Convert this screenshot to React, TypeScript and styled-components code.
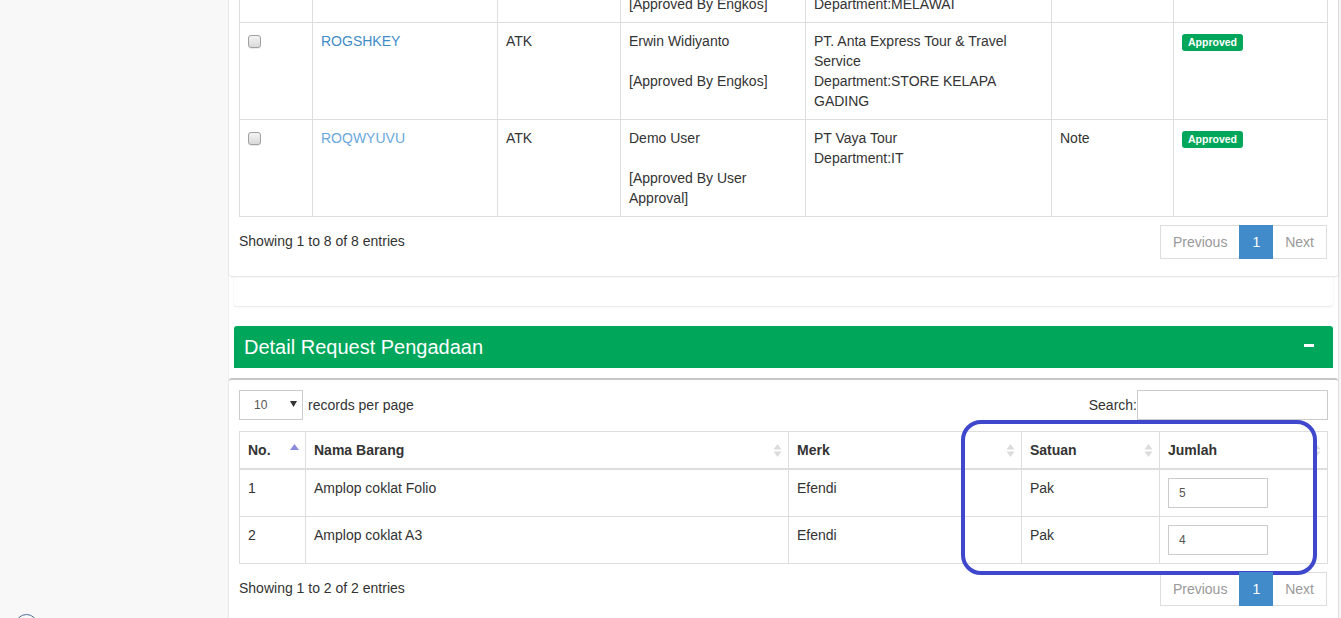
import React from 'react';
import styled, { createGlobalStyle } from 'styled-components';

const GlobalStyle = createGlobalStyle`
  html, body { margin: 0; padding: 0; }
  body {
    background: #f8f8f8;
    font-family: "Liberation Sans", Arial, Helvetica, sans-serif;
    font-size: 14px;
    line-height: 20px;
    color: #333;
    overflow: hidden;
  }
  * { box-sizing: border-box; }
`;

const Page = styled.div`
  display: flex;
  align-items: flex-start;
  height: 618px;
  overflow: hidden;
`;

const Sidebar = styled.aside`
  flex: 0 0 229px;
  height: 618px;
  background: #f8f8f8;
  padding: 614px 0 0 15px;
  overflow: hidden;
`;

const SideIcon = styled.span`
  display: block;
  width: 23px;
  height: 23px;
  border: 1.5px solid #4d6f94;
  border-radius: 50%;
`;

const Content = styled.main`
  flex: 0 0 1108px;
  margin-top: -65px;
  background: #fff;
  border-left: 1px solid #efefef;
  margin-left: -1px;
  min-height: 700px;
`;

const RightEdge = styled.div`
  flex: 1;
  align-self: stretch;
  background: #f5f5f5;
  border-left: 1px solid #e3e3e3;
`;

const ListBox = styled.section`
  position: relative;
  z-index: 2;
  background: #fff;
  border-radius: 0 0 3px 3px;
  box-shadow: 0 1px 2px rgba(0, 0, 0, 0.12);
  padding: 10px 10px 17px;
`;

const EmptyBox = styled.div`
  position: relative;
  z-index: 1;
  margin: 0 5px 20px;
  height: 30px;
  background: #fff;
  border-radius: 0 0 3px 3px;
  box-shadow: 0 1px 2px rgba(0, 0, 0, 0.1);
`;

const DetailBox = styled.section`
  margin: 0 5px;
  background: #fff;
`;

const DetailHeader = styled.div`
  height: 42px;
  background: #00a65a;
  border-radius: 3px 3px 0 0;
  display: flex;
  align-items: center;
  justify-content: space-between;
  padding: 0 19px 0 10px;
  color: #fff;
`;

const DetailTitle = styled.h3`
  margin: 0;
  font-size: 20px;
  line-height: 22px;
  font-weight: normal;
`;

const MinusIcon = styled.span`
  display: block;
  width: 10px;
  height: 3px;
  background: #fff;
  margin-top: -4px;
`;

const DetailGap = styled.div`
  height: 10px;
`;

const TableBox = styled.section`
  position: relative;
  background: #fff;
  border-top: 2px solid #c6c6c6;
  border-radius: 3px 3px 0 0;
  box-shadow: 0 1px 2px rgba(0, 0, 0, 0.1);
  padding: 10px;
  min-height: 260px;
`;

const Toolbar = styled.div`
  display: flex;
  align-items: center;
  justify-content: space-between;
  height: 30px;
`;

const LengthControl = styled.label`
  display: flex;
  align-items: center;
  gap: 5px;
`;

const SelectWrap = styled.span`
  position: relative;
  display: block;
  width: 64px;
  height: 30px;
`;

const Select = styled.select`
  appearance: none;
  -webkit-appearance: none;
  width: 100%;
  height: 100%;
  border: 1px solid #ccc;
  border-radius: 0;
  background: #fff;
  padding: 0 0 0 14px;
  font-family: inherit;
  font-size: 12px;
  color: #555;
`;

const SelectArrow = styled.svg`
  position: absolute;
  right: 6px;
  top: 11px;
  pointer-events: none;
`;

const SearchControl = styled.label`
  display: flex;
  align-items: center;
`;

const SearchInput = styled.input`
  width: 191px;
  height: 30px;
  border: 1px solid #ccc;
  padding: 0 8px;
  font-family: inherit;
`;

const Table = styled.table<{ $mt?: number }>`
  width: 1088px;
  margin-top: ${(p) => p.$mt ?? 0}px;
  border-collapse: collapse;
  table-layout: fixed;
  border: 1px solid #ddd;
`;

const Td = styled.td`
  border: 1px solid #ddd;
  padding: 8px;
  vertical-align: top;
  line-height: 20px;
`;

const Th = styled.th`
  border: 1px solid #ddd;
  border-bottom-width: 2px;
  padding: 8px;
  text-align: left;
  font-weight: bold;
  vertical-align: top;
  line-height: 20px;
`;

const HeadInner = styled.div`
  display: flex;
  align-items: center;
  justify-content: space-between;
  margin-right: -2px;
`;

const Check = styled.input`
  appearance: none;
  -webkit-appearance: none;
  display: block;
  width: 13px;
  height: 13px;
  margin: 4px 0 0;
  border: 1px solid #a0a0a0;
  border-radius: 3px;
  background: linear-gradient(#f4f4f4, #d9d9d9);
  box-shadow: 0 1px 0 rgba(0, 0, 0, 0.08);
`;

const CodeLink = styled.a<{ $visited?: boolean }>`
  color: ${(p) => (p.$visited ? '#6aa8db' : '#3f8dc8')};
  text-decoration: none;
`;

const Badge = styled.span`
  display: inline-block;
  padding: 3px 6px 3px;
  font-size: 10.5px;
  font-weight: bold;
  line-height: 11px;
  color: #fff;
  background: #00a65a;
  border-radius: 3px;
  margin-top: 3px;
  vertical-align: top;
`;

const InfoRow = styled.div`
  display: flex;
  align-items: flex-start;
  justify-content: space-between;
  margin-top: 8px;
`;

const InfoText = styled.div`
  padding-top: 6px;
`;

const Pager = styled.ul`
  display: flex;
  list-style: none;
  margin: 0 1px 0 0;
  padding: 0;
`;

const PageItem = styled.li<{ $active?: boolean }>`
  margin-left: -1px;
  padding: 6px 12px;
  line-height: 20px;
  border: 1px solid ${(p) => (p.$active ? '#428bca' : '#ddd')};
  background: ${(p) => (p.$active ? '#428bca' : '#fff')};
  color: ${(p) => (p.$active ? '#fff' : '#999')};
  position: relative;
  z-index: ${(p) => (p.$active ? 1 : 0)};
`;

const QtyInput = styled.input`
  display: block;
  width: 100px;
  height: 30px;
  border: 1px solid #ccc;
  padding: 0 10px;
  font-family: inherit;
  font-size: 12px;
  color: #555;
`;

const Highlight = styled.div`
  position: absolute;
  left: 732px;
  top: 40px;
  width: 356px;
  height: 155px;
  border: 4px solid #3f48cc;
  border-radius: 20px;
  pointer-events: none;
`;

const SortIcon: React.FC<{ asc?: boolean }> = ({ asc }) =>
  asc ? (
    <svg width="9" height="13" viewBox="0 0 9 13">
      <polygon points="0,6 4.5,0 9,6" fill="#8b8bdc" />
    </svg>
  ) : (
    <svg width="9" height="13" viewBox="0 0 9 13">
      <polygon points="0.5,5.5 4.5,0 8.5,5.5" fill="#dcdcdc" />
      <polygon points="0.5,7.5 4.5,13 8.5,7.5" fill="#dcdcdc" />
    </svg>
  );

type Req = {
  code: string;
  visited?: boolean;
  name: string;
  approval: string;
  company: string;
  dept: string;
  note: string;
};

const requests: Req[] = [
  {
    code: 'ROKQTNWA',
    name: 'Erwin Widiyanto',
    approval: '[Approved By Engkos]',
    company: 'PT. Anta Express Tour & Travel Service',
    dept: 'Department:MELAWAI',
    note: '',
  },
  {
    code: 'ROGSHKEY',
    name: 'Erwin Widiyanto',
    approval: '[Approved By Engkos]',
    company: 'PT. Anta Express Tour & Travel Service',
    dept: 'Department:STORE KELAPA GADING',
    note: '',
  },
  {
    code: 'ROQWYUVU',
    visited: true,
    name: 'Demo User',
    approval: '[Approved By User Approval]',
    company: 'PT Vaya Tour',
    dept: 'Department:IT',
    note: 'Note',
  },
];

const items = [
  { no: 1, name: 'Amplop coklat Folio', merk: 'Efendi', unit: 'Pak', qty: '5' },
  { no: 2, name: 'Amplop coklat A3', merk: 'Efendi', unit: 'Pak', qty: '4' },
];

const Pagination: React.FC = () => (
  <Pager>
    <PageItem>Previous</PageItem>
    <PageItem $active>1</PageItem>
    <PageItem>Next</PageItem>
  </Pager>
);

export default function App() {
  return (
    <>
      <GlobalStyle />
      <Page>
        <Sidebar>
          <SideIcon />
        </Sidebar>
        <Content>
          <ListBox>
            <Table>
              <colgroup>
                <col style={{ width: 73 }} />
                <col style={{ width: 185 }} />
                <col style={{ width: 123 }} />
                <col style={{ width: 185 }} />
                <col style={{ width: 246 }} />
                <col style={{ width: 122 }} />
                <col style={{ width: 154 }} />
              </colgroup>
              <tbody>
                {requests.map((r) => (
                  <tr key={r.code}>
                    <Td>
                      <Check type="checkbox" />
                    </Td>
                    <Td>
                      <CodeLink href="#" $visited={r.visited}>
                        {r.code}
                      </CodeLink>
                    </Td>
                    <Td>ATK</Td>
                    <Td>
                      {r.name}
                      <br />
                      <br />
                      {r.approval}
                    </Td>
                    <Td>
                      {r.company}
                      <br />
                      {r.dept}
                    </Td>
                    <Td>{r.note}</Td>
                    <Td>
                      <Badge>Approved</Badge>
                    </Td>
                  </tr>
                ))}
              </tbody>
            </Table>
            <InfoRow>
              <InfoText>Showing 1 to 8 of 8 entries</InfoText>
              <Pagination />
            </InfoRow>
          </ListBox>

          <EmptyBox />

          <DetailBox>
            <DetailHeader>
              <DetailTitle>Detail Request Pengadaan</DetailTitle>
              <MinusIcon />
            </DetailHeader>
            <DetailGap />
          </DetailBox>

          <TableBox>
            <Toolbar>
              <LengthControl>
                <SelectWrap>
                  <Select defaultValue="10">
                    <option value="10">10</option>
                    <option value="25">25</option>
                    <option value="50">50</option>
                  </Select>
                  <SelectArrow width="7" height="6" viewBox="0 0 7 6">
                    <polygon points="0,0 7,0 3.5,6" fill="#333" />
                  </SelectArrow>
                </SelectWrap>
                records per page
              </LengthControl>
              <SearchControl>
                Search:
                <SearchInput type="text" />
              </SearchControl>
            </Toolbar>

            <Table $mt={11}>
              <colgroup>
                <col style={{ width: 66 }} />
                <col style={{ width: 483 }} />
                <col style={{ width: 233 }} />
                <col style={{ width: 138 }} />
                <col style={{ width: 168 }} />
              </colgroup>
              <thead>
                <tr>
                  <Th>
                    <HeadInner>
                      <span>No.</span>
                      <SortIcon asc />
                    </HeadInner>
                  </Th>
                  <Th>
                    <HeadInner>
                      <span>Nama Barang</span>
                      <SortIcon />
                    </HeadInner>
                  </Th>
                  <Th>
                    <HeadInner>
                      <span>Merk</span>
                      <SortIcon />
                    </HeadInner>
                  </Th>
                  <Th>
                    <HeadInner>
                      <span>Satuan</span>
                      <SortIcon />
                    </HeadInner>
                  </Th>
                  <Th>
                    <HeadInner>
                      <span>Jumlah</span>
                      <SortIcon />
                    </HeadInner>
                  </Th>
                </tr>
              </thead>
              <tbody>
                {items.map((it) => (
                  <tr key={it.no}>
                    <Td>{it.no}</Td>
                    <Td>{it.name}</Td>
                    <Td>{it.merk}</Td>
                    <Td>{it.unit}</Td>
                    <Td>
                      <QtyInput type="text" defaultValue={it.qty} />
                    </Td>
                  </tr>
                ))}
              </tbody>
            </Table>

            <InfoRow>
              <InfoText>Showing 1 to 2 of 2 entries</InfoText>
              <Pagination />
            </InfoRow>

            <Highlight />
          </TableBox>
        </Content>
        <RightEdge />
      </Page>
    </>
  );
}
